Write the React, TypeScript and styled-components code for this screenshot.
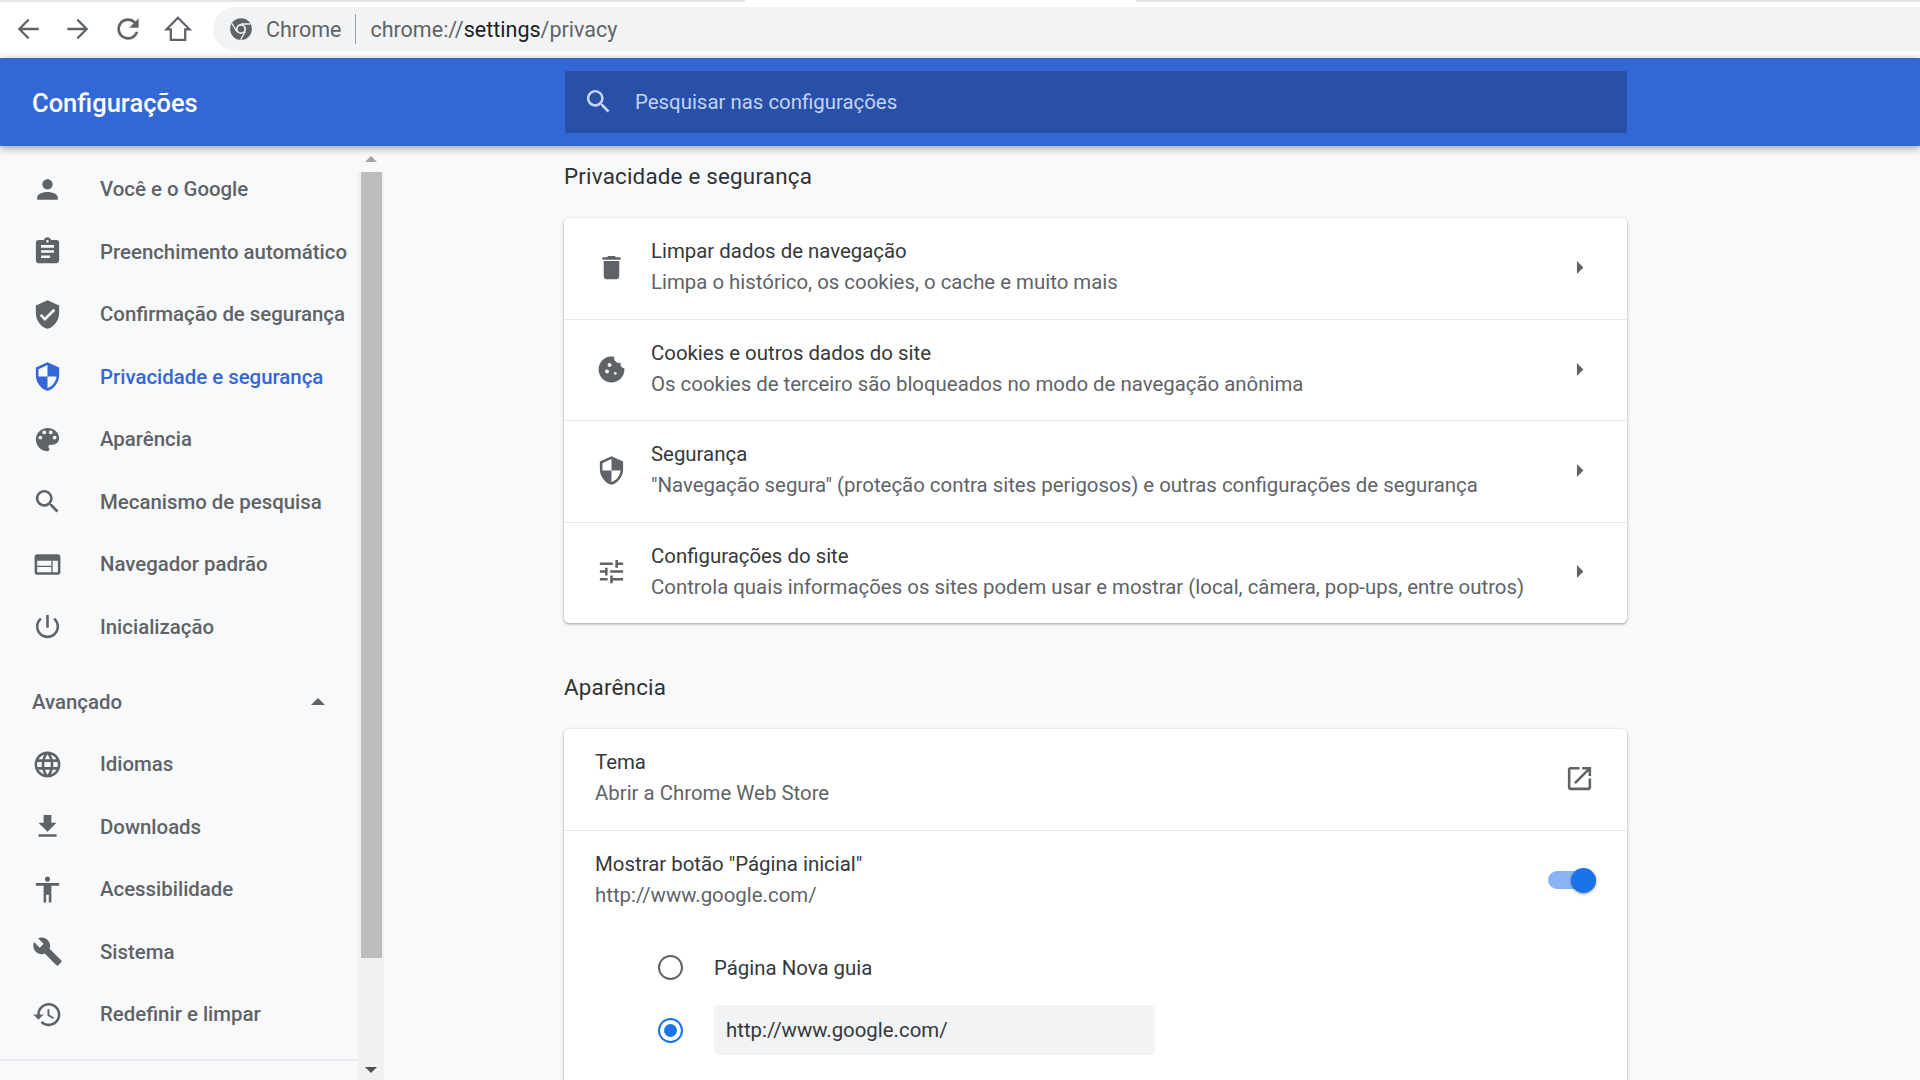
import React from 'react'
import styled, { createGlobalStyle } from 'styled-components'

const GlobalStyle = createGlobalStyle`
  html, body {
    margin: 0;
    height: 100%;
    overflow: hidden;
    background: #f8f9fa;
    font-family: Roboto, "Liberation Sans", sans-serif;
  }
  * {
    box-sizing: border-box;
  }
`

const Page = styled.div`
  width: 1920px;
  height: 1080px;
  display: flex;
  flex-direction: column;
  overflow: hidden;
`

const TabEdge = styled.div`
  height: 2px;
  flex: none;
  display: flex;
  background: #e4e6ea;
`

const TabEdgeGap = styled.div`
  width: 391px;
  margin-left: 745px;
  background: #fff;
`

const Toolbar = styled.div`
  height: 56px;
  flex: none;
  display: flex;
  align-items: flex-start;
  padding: 5px 0 0 12px;
  background: #fff;
`

const ToolButton = styled.div`
  width: 50px;
  height: 44px;
  flex: none;
  display: flex;
  align-items: center;
  padding-left: 0;
  color: #5f6368;
`

const AddressBar = styled.div`
  flex: 1;
  height: 44px;
  margin-left: 1px;
  padding-left: 15px;
  display: flex;
  align-items: center;
  background: #f1f3f4;
  border-radius: 22px 0 0 22px;
  font-size: 21.5px;
  color: #5f6368;
`

const SiteName = styled.span`
  margin-left: 12px;
`

const AddressDivider = styled.div`
  width: 1px;
  height: 30px;
  margin: 0 14px 0 14px;
  background: #9aa0a6;
`

const UrlHost = styled.span`
  color: #202124;
`

const Header = styled.header`
  height: 88px;
  flex: none;
  position: relative;
  z-index: 2;
  display: flex;
  align-items: center;
  background: #3367d6;
  box-shadow: 0 2px 8px rgba(0, 0, 0, 0.38);
`

const HeaderTitle = styled.h1`
  width: 565px;
  margin: 0;
  padding: 2px 0 0 32px;
  flex: none;
  font-size: 25.5px;
  font-weight: 500;
  color: #fff;
`

const SearchBox = styled.div`
  width: 1062px;
  height: 62px;
  display: flex;
  align-items: center;
  padding: 0 0 1px 18px;
  background: #2850a7;
  border-radius: 2px;
  font-size: 20.4px;
  color: #c3d2f3;
`

const SearchText = styled.span`
  margin-left: 21px;
`

const Body = styled.div`
  flex: 1;
  min-height: 0;
  display: flex;
`

const Sidebar = styled.aside`
  width: 384px;
  flex: none;
  display: flex;
`

const Nav = styled.nav`
  width: 358px;
  flex: none;
  padding-top: 12px;
`

const NavItem = styled.div<{ $active?: boolean }>`
  height: 62.5px;
  display: flex;
  align-items: center;
  padding-left: 31.5px;
  font-size: 20.4px;
  font-weight: 500;
  color: ${(p) => (p.$active ? '#3367d6' : '#5f6368')};
`

const NavLabel = styled.span`
  margin-left: 37.5px;
  white-space: nowrap;
`

const AdvancedRow = styled.div`
  height: 62.5px;
  margin: 12.5px 0 0;
  display: flex;
  align-items: center;
  justify-content: space-between;
  padding: 0 33px 0 32px;
  font-size: 20.4px;
  font-weight: 500;
  color: #5f6368;
`

const CaretUp = styled.div`
  width: 0;
  height: 0;
  border-left: 7px solid transparent;
  border-right: 7px solid transparent;
  border-bottom: 7px solid #5f6368;
`

const NavFooter = styled.div`
  margin-top: 13.5px;
  border-top: 2px solid #e8eaed;
`

const ScrollTrack = styled.div`
  width: 26px;
  flex: none;
  display: flex;
  flex-direction: column;
  align-items: center;
  background: #f1f1f1;
`

const ScrollCap = styled.div<{ $down?: boolean }>`
  height: 26px;
  width: 26px;
  flex: none;
  display: flex;
  align-items: center;
  justify-content: center;
  padding-top: ${(p) => (p.$down ? '6px' : '0')};
  background: ${(p) => (p.$down ? 'transparent' : '#f8f9fa')};

  &::before {
    content: '';
    border-left: 6px solid transparent;
    border-right: 6px solid transparent;
    ${(p) => (p.$down ? 'border-top: 6px solid #505050;' : 'border-bottom: 6px solid #a3a3a3;')}
  }
`

const ScrollThumb = styled.div`
  width: 21px;
  height: 786px;
  flex: none;
  background: #bdbdbd;
`

const ScrollRest = styled.div`
  flex: 1;
`

const Main = styled.main`
  flex: 1;
  min-width: 0;
  padding: 15px 0 0 180px;
`

const Section = styled.section`
  width: 1063px;
  margin-bottom: 49px;
`

const SectionTitle = styled.h2`
  margin: 0 0 26.5px;
  height: 30px;
  line-height: 30px;
  font-size: 22.4px;
  font-weight: 400;
  letter-spacing: 0.2px;
  color: #303134;
`

const Card = styled.div`
  background: #fff;
  border-radius: 5px;
  box-shadow: 0 1px 2px rgba(60, 64, 67, 0.3), 0 1px 3px 1px rgba(60, 64, 67, 0.15);
`

const Row = styled.div<{ $indent?: number }>`
  height: 101.4px;
  display: flex;
  align-items: center;
  padding: 0 31px 2px ${(p) => p.$indent ?? 32}px;

  & + & {
    border-top: 1px solid #e8eaed;
  }
`

const RowIcon = styled.div`
  width: 31px;
  flex: none;
  display: flex;
  justify-content: center;
  color: #5f6368;
`

const RowText = styled.div<{ $gap?: number }>`
  flex: 1;
  min-width: 0;
  margin-left: ${(p) => p.$gap ?? 24}px;
`

const RowTitle = styled.div`
  font-size: 20.4px;
  line-height: 31px;
  color: #36383b;
`

const RowSub = styled.div`
  font-size: 20.4px;
  line-height: 31px;
  color: #5f6368;
`

const RowAction = styled.div`
  width: 31px;
  margin-right: 1px;
  flex: none;
  display: flex;
  justify-content: center;
  color: #5f6368;
`

const Toggle = styled.div`
  width: 48px;
  height: 18px;
  flex: none;
  display: flex;
  align-items: center;
  justify-content: flex-end;
  background: #8ab4f8;
  border-radius: 9px;
`

const ToggleKnob = styled.div`
  width: 25px;
  height: 25px;
  border-radius: 50%;
  background: #1a73e8;
  box-shadow: 0 1px 3px rgba(0, 0, 0, 0.4);
`

const RadioGroup = styled.div`
  padding: 5px 0 28px 94px;
`

const RadioRow = styled.div`
  height: 62.5px;
  display: flex;
  align-items: center;
`

const Radio = styled.div<{ $checked?: boolean }>`
  width: 25px;
  height: 25px;
  flex: none;
  display: flex;
  align-items: center;
  justify-content: center;
  border-radius: 50%;
  border: 2.5px solid ${(p) => (p.$checked ? '#1a73e8' : '#5f6368')};

  &::after {
    content: '';
    width: 13px;
    height: 13px;
    border-radius: 50%;
    background: ${(p) => (p.$checked ? '#1a73e8' : 'transparent')};
  }
`

const RadioLabel = styled.span`
  margin-left: 31px;
  font-size: 20.4px;
  color: #36383b;
`

const UrlInput = styled.div`
  width: 441px;
  height: 50px;
  margin-left: 31px;
  padding-left: 12px;
  display: flex;
  align-items: center;
  background: #f1f3f4;
  border-radius: 5px;
  font-size: 20.4px;
  color: #36383b;
`

const Glyph = ({ d, size = 31 }: { d: string; size?: number }) => (
  <svg width={size} height={size} viewBox="0 0 24 24" fill="currentColor">
    <path d={d} />
  </svg>
)

const Stroke = ({ d }: { d: string }) => (
  <svg width={32} height={32} viewBox="0 0 24 24" fill="none" stroke="currentColor" strokeWidth={1.7}>
    <path d={d} />
  </svg>
)

const ChromeMark = () => (
  <svg width={26} height={26} viewBox="0 0 24 24">
    <circle cx="12" cy="12" r="10" fill="#5f6368" />
    <circle cx="12" cy="12" r="4.6" fill="#f1f3f4" />
    <circle cx="12" cy="12" r="3.1" fill="#5f6368" />
    <path d="M12 7.4h8.6M8 14.3L3.8 7M16 14.3l-4.3 7.4" stroke="#f1f3f4" strokeWidth="1.2" fill="none" />
  </svg>
)

const ICONS = {
  person: 'M12 12c2.21 0 4-1.79 4-4s-1.79-4-4-4-4 1.79-4 4 1.79 4 4 4zm0 2c-2.67 0-8 1.34-8 4v2h16v-2c0-2.66-5.33-4-8-4z',
  assignment: 'M19 3h-4.18C14.4 1.84 13.3 1 12 1c-1.3 0-2.4.84-2.82 2H5c-1.1 0-2 .9-2 2v14c0 1.1.9 2 2 2h14c1.1 0 2-.9 2-2V5c0-1.1-.9-2-2-2zm-7 0c.55 0 1 .45 1 1s-.45 1-1 1-1-.45-1-1 .45-1 1-1zm2 14H7v-2h7v2zm3-4H7v-2h10v2zm0-4H7V7h10v2z',
  verified: 'M12 1L3 5v6c0 5.55 3.84 10.74 9 12 5.16-1.26 9-6.45 9-12V5l-9-4zm-2 16l-4-4 1.41-1.41L10 14.17l6.59-6.59L18 9l-8 8z',
  security: 'M12 1L3 5v6c0 5.55 3.84 10.74 9 12 5.16-1.26 9-6.45 9-12V5l-9-4zm0 10.99h7c-.53 4.12-3.28 7.79-7 8.94V12H5V6.3l7-3.11v8.8z',
  palette: 'M12 3c-4.97 0-9 4.03-9 9s4.03 9 9 9c.83 0 1.5-.67 1.5-1.5 0-.39-.15-.74-.39-1.01-.23-.26-.38-.61-.38-.99 0-.83.67-1.5 1.5-1.5H16c2.76 0 5-2.24 5-5 0-4.42-4.03-8-9-8zm-5.5 9c-.83 0-1.5-.67-1.5-1.5S5.67 9 6.5 9 8 9.67 8 10.5 7.33 12 6.5 12zm3-4C8.67 8 8 7.33 8 6.5S8.67 5 9.5 5s1.5.67 1.5 1.5S10.33 8 9.5 8zm5 0c-.83 0-1.5-.67-1.5-1.5S13.67 5 14.5 5s1.5.67 1.5 1.5S15.33 8 14.5 8zm3 4c-.83 0-1.5-.67-1.5-1.5S16.67 9 17.5 9s1.5.67 1.5 1.5-.67 1.5-1.5 1.5z',
  search: 'M15.5 14h-.79l-.28-.27C15.41 12.59 16 11.11 16 9.5 16 5.91 13.09 3 9.5 3S3 5.91 3 9.5 5.91 16 9.5 16c1.61 0 3.09-.59 4.23-1.57l.27.28v.79l5 4.99L20.49 19l-4.99-5zm-6 0C7.01 14 5 11.99 5 9.5S7.01 5 9.5 5 14 7.01 14 9.5 11.99 14 9.5 14z',
  web: 'M20 4H4c-1.1 0-2 .9-2 2v12c0 1.1.9 2 2 2h16c1.1 0 2-.9 2-2V6c0-1.1-.9-2-2-2zm-5 14H4v-4h11v4zm0-5H4V9h11v4zm5 5h-4V9h4v9z',
  power: 'M13 3h-2v10h2V3zm4.83 2.17l-1.42 1.42C17.99 7.86 19 9.81 19 12c0 3.87-3.13 7-7 7s-7-3.13-7-7c0-2.19 1.01-4.14 2.58-5.42L6.17 5.17C4.23 6.82 3 9.26 3 12c0 4.97 4.03 9 9 9s9-4.03 9-9c0-2.74-1.23-5.18-3.17-6.83z',
  language: 'M11.99 2C6.47 2 2 6.48 2 12s4.47 10 9.99 10C17.52 22 22 17.52 22 12S17.52 2 11.99 2zm6.93 6h-2.95c-.32-1.25-.78-2.45-1.38-3.56 1.84.63 3.37 1.91 4.33 3.56zM12 4.04c.83 1.2 1.48 2.53 1.91 3.96h-3.82c.43-1.43 1.08-2.76 1.91-3.96zM4.26 14C4.1 13.36 4 12.69 4 12s.1-1.36.26-2h3.38c-.08.66-.14 1.32-.14 2 0 .68.06 1.34.14 2H4.26zm.82 2h2.95c.32 1.25.78 2.45 1.38 3.56-1.84-.63-3.37-1.9-4.33-3.56zm2.95-8H5.08c.96-1.66 2.49-2.93 4.33-3.56C8.81 5.55 8.35 6.75 8.03 8zM12 19.96c-.83-1.2-1.48-2.53-1.91-3.96h3.82c-.43 1.43-1.08 2.76-1.91 3.96zM14.34 14H9.66c-.09-.66-.16-1.32-.16-2 0-.68.07-1.35.16-2h4.68c.09.65.16 1.32.16 2 0 .68-.07 1.34-.16 2zm.25 5.56c.6-1.11 1.06-2.31 1.38-3.56h2.95c-.96 1.65-2.49 2.93-4.33 3.56zM16.36 14c.08-.66.14-1.32.14-2 0-.68-.06-1.34-.14-2h3.38c.16.64.26 1.31.26 2s-.1 1.36-.26 2h-3.38z',
  download: 'M19 9h-4V3H9v6H5l7 7 7-7zM5 18v2h14v-2H5z',
  accessibility: 'M12 2c1.1 0 2 .9 2 2s-.9 2-2 2-2-.9-2-2 .9-2 2-2zm9 7h-6v13h-2v-6h-2v6H9V9H3V7h18v2z',
  build: 'M22.7 19l-9.1-9.1c.9-2.3.4-5-1.5-6.9-2-2-5-2.4-7.4-1.3L9 6 6 9 1.6 4.7C.4 7.1.9 10.1 2.9 12.1c1.9 1.9 4.6 2.4 6.9 1.5l9.1 9.1c.4.4 1 .4 1.4 0l2.3-2.3c.5-.4.5-1.1.1-1.4z',
  restore: 'M13 3c-4.97 0-9 4.03-9 9H1l3.89 3.89.07.14L9 12H6c0-3.87 3.13-7 7-7s7 3.13 7 7-3.13 7-7 7c-1.93 0-3.68-.79-4.94-2.06l-1.42 1.42C8.27 19.99 10.51 21 13 21c4.97 0 9-4.03 9-9s-4.03-9-9-9zm-1 5v5l4.28 2.54.72-1.21-3.5-2.08V8H12z',
  trash: 'M6 19c0 1.1.9 2 2 2h8c1.1 0 2-.9 2-2V7H6v12zM19 4h-3.5l-1-1h-5l-1 1H5v2h14V4z',
  cookie: 'M21.95 10.99c-1.79-.03-3.7-1.95-2.68-4.22-2.97 1-5.78-1.59-5.19-4.56C7.11.74 2 6.41 2 12c0 5.52 4.48 10 10 10 5.89 0 10.54-5.08 9.95-11.01zM8.5 15c-.83 0-1.5-.67-1.5-1.5S7.67 12 8.5 12s1.5.67 1.5 1.5S9.33 15 8.5 15zm2-5C9.67 10 9 9.33 9 8.5S9.67 7 10.5 7s1.5.67 1.5 1.5-.67 1.5-1.5 1.5zm4.5 6c-.55 0-1-.45-1-1s.45-1 1-1 1 .45 1 1-.45 1-1 1z',
  tune: 'M3 17v2h6v-2H3zM3 5v2h10V5H3zm10 16v-2h8v-2h-8v-2h-2v6h2zM7 9v2H3v2h4v2h2V9H7zm14 4v-2H11v2h10zm-6-4h2V7h4V5h-4V3h-2v6z',
  arrowRight: 'M10 7l5 5-5 5z',
  openNew: 'M19 19H5V5h7V3H5c-1.11 0-2 .9-2 2v14c0 1.1.89 2 2 2h14c1.1 0 2-.9 2-2v-7h-2v7zM14 3v2h3.59l-9.83 9.83 1.41 1.41L19 6.41V10h2V3h-7z',
  refresh: 'M17.65 6.35C16.2 4.9 14.21 4 12 4c-4.42 0-7.99 3.58-7.99 8s3.57 8 7.99 8c3.73 0 6.84-2.55 7.73-6h-2.08c-.82 2.33-3.04 4-5.65 4-3.31 0-6-2.69-6-6s2.69-6 6-6c1.66 0 3.14.69 4.22 1.78L13 11h7V4l-2.35 2.35z',
}

const mainNav = [
  { icon: ICONS.person, label: 'Você e o Google' },
  { icon: ICONS.assignment, label: 'Preenchimento automático' },
  { icon: ICONS.verified, label: 'Confirmação de segurança' },
  { icon: ICONS.security, label: 'Privacidade e segurança', active: true },
  { icon: ICONS.palette, label: 'Aparência' },
  { icon: ICONS.search, label: 'Mecanismo de pesquisa' },
  { icon: ICONS.web, label: 'Navegador padrão' },
  { icon: ICONS.power, label: 'Inicialização' },
]

const advancedNav = [
  { icon: ICONS.language, label: 'Idiomas' },
  { icon: ICONS.download, label: 'Downloads' },
  { icon: ICONS.accessibility, label: 'Acessibilidade' },
  { icon: ICONS.build, label: 'Sistema' },
  { icon: ICONS.restore, label: 'Redefinir e limpar' },
]

const privacyRows = [
  { icon: ICONS.trash, title: 'Limpar dados de navegação', sub: 'Limpa o histórico, os cookies, o cache e muito mais' },
  { icon: ICONS.cookie, title: 'Cookies e outros dados do site', sub: 'Os cookies de terceiro são bloqueados no modo de navegação anônima' },
  { icon: ICONS.security, title: 'Segurança', sub: '"Navegação segura" (proteção contra sites perigosos) e outras configurações de segurança' },
  { icon: ICONS.tune, title: 'Configurações do site', sub: 'Controla quais informações os sites podem usar e mostrar (local, câmera, pop-ups, entre outros)' },
]

const NavEntry = ({ icon, label, active }: { icon: string; label: string; active?: boolean }) => (
  <NavItem $active={active}>
    <Glyph d={icon} />
    <NavLabel>{label}</NavLabel>
  </NavItem>
)

const App = () => (
  <Page>
    <GlobalStyle />
    <TabEdge>
      <TabEdgeGap />
    </TabEdge>
    <Toolbar>
      <ToolButton>
        <Stroke d="M20 12H5.5M12.5 5l-7 7 7 7" />
      </ToolButton>
      <ToolButton>
        <Stroke d="M4 12h14.5M11.5 5l7 7-7 7" />
      </ToolButton>
      <ToolButton>
        <Glyph d={ICONS.refresh} size={32} />
      </ToolButton>
      <ToolButton>
        <Stroke d="M12 3.6L3.4 12.2H6.6V20.2H17.4V12.2H20.6Z" />
      </ToolButton>
      <AddressBar>
        <ChromeMark />
        <SiteName>Chrome</SiteName>
        <AddressDivider />
        <span>
          chrome://<UrlHost>settings</UrlHost>/privacy
        </span>
      </AddressBar>
    </Toolbar>
    <Header>
      <HeaderTitle>Configurações</HeaderTitle>
      <SearchBox>
        <Glyph d={ICONS.search} />
        <SearchText>Pesquisar nas configurações</SearchText>
      </SearchBox>
    </Header>
    <Body>
      <Sidebar>
        <Nav>
          {mainNav.map((item) => (
            <NavEntry key={item.label} {...item} />
          ))}
          <AdvancedRow>
            Avançado
            <CaretUp />
          </AdvancedRow>
          {advancedNav.map((item) => (
            <NavEntry key={item.label} {...item} />
          ))}
          <NavFooter />
        </Nav>
        <ScrollTrack>
          <ScrollCap />
          <ScrollThumb />
          <ScrollRest />
          <ScrollCap $down />
        </ScrollTrack>
      </Sidebar>
      <Main>
        <Section>
          <SectionTitle>Privacidade e segurança</SectionTitle>
          <Card>
            {privacyRows.map((row) => (
              <Row key={row.title}>
                <RowIcon>
                  <Glyph d={row.icon} />
                </RowIcon>
                <RowText>
                  <RowTitle>{row.title}</RowTitle>
                  <RowSub>{row.sub}</RowSub>
                </RowText>
                <RowAction>
                  <Glyph d={ICONS.arrowRight} />
                </RowAction>
              </Row>
            ))}
          </Card>
        </Section>
        <Section>
          <SectionTitle>Aparência</SectionTitle>
          <Card>
            <Row $indent={31}>
              <RowText $gap={0}>
                <RowTitle>Tema</RowTitle>
                <RowSub>Abrir a Chrome Web Store</RowSub>
              </RowText>
              <RowAction>
                <Glyph d={ICONS.openNew} />
              </RowAction>
            </Row>
            <Row $indent={31}>
              <RowText $gap={0}>
                <RowTitle>Mostrar botão "Página inicial"</RowTitle>
                <RowSub>http://www.google.com/</RowSub>
              </RowText>
              <Toggle>
                <ToggleKnob />
              </Toggle>
            </Row>
            <RadioGroup>
              <RadioRow>
                <Radio />
                <RadioLabel>Página Nova guia</RadioLabel>
              </RadioRow>
              <RadioRow>
                <Radio $checked />
                <UrlInput>http://www.google.com/</UrlInput>
              </RadioRow>
            </RadioGroup>
          </Card>
        </Section>
      </Main>
    </Body>
  </Page>
)

export default App
